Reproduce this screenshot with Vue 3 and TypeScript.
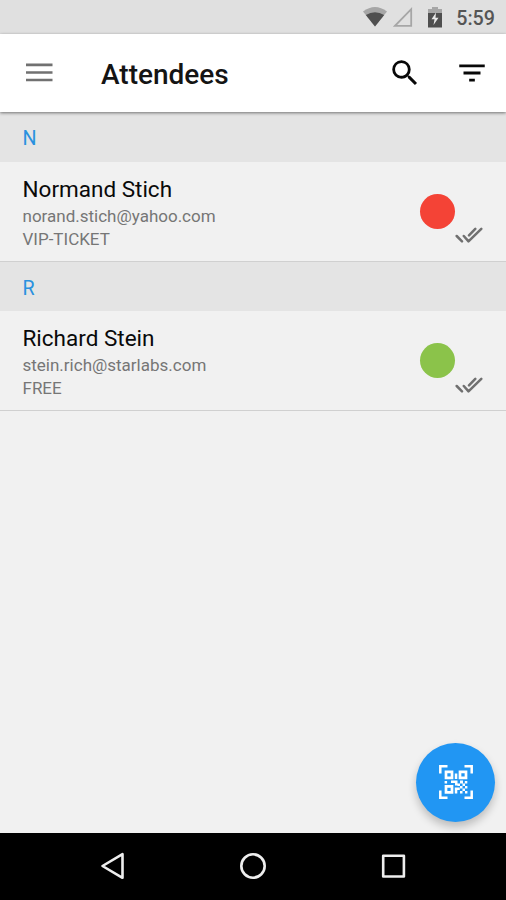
<script setup lang="ts">
interface Attendee {
  name: string
  email: string
  ticket: string
  color: string
}

interface Section {
  letter: string
  people: Attendee[]
}

const sections: Section[] = [
  {
    letter: 'N',
    people: [
      { name: 'Normand Stich', email: 'norand.stich@yahoo.com', ticket: 'VIP-TICKET', color: '#f44336' },
    ],
  },
  {
    letter: 'R',
    people: [
      { name: 'Richard Stein', email: 'stein.rich@starlabs.com', ticket: 'FREE', color: '#8bc34a' },
    ],
  },
]
</script>

<template>
  <div class="screen">
    <div class="status">
      <svg class="wifi" width="26" height="20" viewBox="0 0 26 20">
        <path d="M1 4.500Q13-4.500 25 4.500L13 19.500Z" fill="#a6a6a6" />
        <path d="M3.800 8Q13 2.500 22.200 8L13 19.500Z" fill="#4f4f4f" />
      </svg>
      <svg class="signal" width="20" height="20" viewBox="0 0 20 20">
        <path d="M18.200 2.200V18.800H2Z" fill="none" stroke="#a6a6a6" stroke-width="1.800" />
      </svg>
      <svg class="battery" width="14" height="21" viewBox="0 0 14 21">
        <path d="M4 0H10V2H14V8H0V2H4Z" fill="#a6a6a6" />
        <path d="M0 6H14V20.500H0Z" fill="#4f4f4f" />
        <path d="M8 5.500L3.500 12.300H6.500L5.500 18L10.500 10.800H7.500Z" fill="#e8e8e8" />
      </svg>
      <span class="clock">5:59</span>
    </div>

    <header class="toolbar">
      <svg class="menu" width="34" height="34" viewBox="0 0 34 34">
        <path d="M4 8.800H30.500M4 16.500H30.500M4 24H30.500" stroke="#717171" stroke-width="2.700" />
      </svg>
      <h1>Attendees</h1>
      <svg class="search" width="34" height="34" viewBox="0 0 24 24">
        <path d="M15.500 14h-.79l-.28-.27A6.471 6.471 0 0 0 16 9.500 6.500 6.500 0 1 0 9.500 16c1.610 0 3.090-.59 4.230-1.570l.27.28v.79l5 4.990L20.490 19l-4.990-5zm-6 0C7.010 14 5 11.990 5 9.500S7.010 5 9.500 5 14 7.010 14 9.500 11.990 14 9.500 14z" fill="#080808" />
      </svg>
      <svg class="filter" width="34" height="34" viewBox="0 0 24 24">
        <path d="M10 18h4v-2h-4v2zM3 6v2h18V6H3zm3 7h12v-2H6v2z" fill="#080808" />
      </svg>
    </header>

    <main>
      <section v-for="section in sections" :key="section.letter">
        <h2>{{ section.letter }}</h2>
        <article v-for="person in section.people" :key="person.email">
          <div class="info">
            <div class="name">{{ person.name }}</div>
            <div class="detail">{{ person.email }}</div>
            <div class="detail">{{ person.ticket }}</div>
          </div>
          <div class="dot" :style="{ background: person.color }"></div>
          <svg class="checks" width="28" height="17" viewBox="0 0 28 17">
            <path d="M1.700 9L7 14.300M8.800 9L13.500 14.300L26.300 1.800M14 8.300L20.300 1.800" fill="none" stroke="#707070" stroke-width="2.500" stroke-linecap="round" stroke-linejoin="round" />
          </svg>
        </article>
      </section>
    </main>

    <button class="fab" aria-label="Scan">
      <svg width="34" height="34" viewBox="0 0 34 34">
        <path d="M1.300 8.500V1.300H8.500M25.500 1.300H32.700V8.500M32.700 25.500V32.700H25.500M8.500 32.700H1.300V25.500" fill="none" stroke="#fff" stroke-width="2.500" />
        <path d="M7 6.800H13V12.800H7ZM21 6.800H27V12.800H21ZM7 21.300H13V27.300H7Z" fill="none" stroke="#fff" stroke-width="2.700" />
        <path d="M15.800 8.500h2.500v5.500h-2.500zM5.600 16h2.500v2.500H5.600zM12 15.500h6.500v5H16V18h-4zM21 15.500h3v3h-3zM25.800 16h2.500v2.500h-2.500zM18.500 18.500H21V21h-2.500zM23.500 18.500H26V21h-2.500zM21 21h2.500v2.500H21zM26 21h2.400v2.500H26zM15.800 22.500h5V25h-2.500v3.500h-2.500zM23.500 23.500H26V26h-2.500zM21 26h2.500v2.500H21zM26 26h2.400v2.500H26z" fill="#fff" />
      </svg>
    </button>

    <nav class="navbar">
      <svg width="34" height="34" viewBox="0 0 34 34">
        <path d="M26.500 5.200V28.800L6.500 17Z" fill="none" stroke="#eee" stroke-width="2.600" stroke-linejoin="round" />
      </svg>
      <svg width="34" height="34" viewBox="0 0 34 34">
        <circle cx="17" cy="17" r="11.700" fill="none" stroke="#eee" stroke-width="2.600" />
      </svg>
      <svg width="34" height="34" viewBox="0 0 34 34">
        <rect x="7.200" y="6.800" width="20.700" height="20.700" fill="none" stroke="#eee" stroke-width="2.600" stroke-linejoin="round" />
      </svg>
    </nav>
  </div>
</template>

<style>
body {
  margin: 0;
}
</style>

<style scoped>
.screen {
  position: relative;
  display: flex;
  flex-direction: column;
  width: 506px;
  height: 900px;
  overflow: hidden;
  background: #f1f1f1;
  font-family: Roboto, "Liberation Sans", sans-serif;
}
.status {
  display: flex;
  flex: none;
  align-items: flex-start;
  justify-content: flex-end;
  box-sizing: border-box;
  height: 34px;
  padding: 7px 11px 0 0;
  background: #e0e0e0;
}
.signal {
  margin-left: 5px;
}
.battery {
  margin-left: 15px;
}
.clock {
  margin: 1px 0 0 14px;
  color: #555;
  font-size: 19.700px;
  font-weight: 500;
  line-height: 22px;
}
.toolbar {
  z-index: 1;
  display: flex;
  flex: none;
  align-items: center;
  box-sizing: border-box;
  height: 78px;
  padding: 0 17px 0 22px;
  background: #fff;
  box-shadow: 0 1px 3px rgba(0, 0, 0, 0.5);
}
h1 {
  flex: 1;
  margin: 3px 0 0 45px;
  color: #141414;
  font-size: 28px;
  font-weight: 500;
  line-height: 34px;
}
.filter {
  margin-left: 33px;
}
main {
  flex: 1;
}
h2 {
  box-sizing: border-box;
  height: 49.500px;
  margin: 0;
  padding: 2px 22.500px 0;
  background: #e4e4e4;
  color: #2a91df;
  font-size: 19.700px;
  font-weight: 400;
  line-height: 49px;
}
article {
  display: flex;
  box-sizing: border-box;
  height: 100px;
  padding: 14px 23px 0 22.500px;
  border-bottom: 1.500px solid #d0d0d0;
}
.info {
  flex: 1;
}
.name {
  margin-bottom: 2px;
  color: #0a0a0a;
  font-size: 22.500px;
  line-height: 27px;
}
.detail {
  color: #767676;
  font-size: 17px;
  line-height: 23px;
}
.dot {
  width: 35px;
  height: 35px;
  margin-top: 18px;
  border-radius: 50%;
}
.checks {
  margin-top: 51.500px;
}
.fab {
  position: absolute;
  right: 11px;
  bottom: 78.500px;
  display: flex;
  align-items: center;
  justify-content: center;
  width: 79px;
  height: 79px;
  padding: 0;
  border: 0;
  border-radius: 50%;
  background: #2196f3;
  box-shadow: 0 5px 9px rgba(0, 0, 0, 0.22);
}
.navbar {
  z-index: 1;
  display: flex;
  flex: none;
  align-items: center;
  justify-content: center;
  gap: 106px;
  box-sizing: border-box;
  height: 67px;
  padding-bottom: 1px;
  background: #000;
}
</style>
